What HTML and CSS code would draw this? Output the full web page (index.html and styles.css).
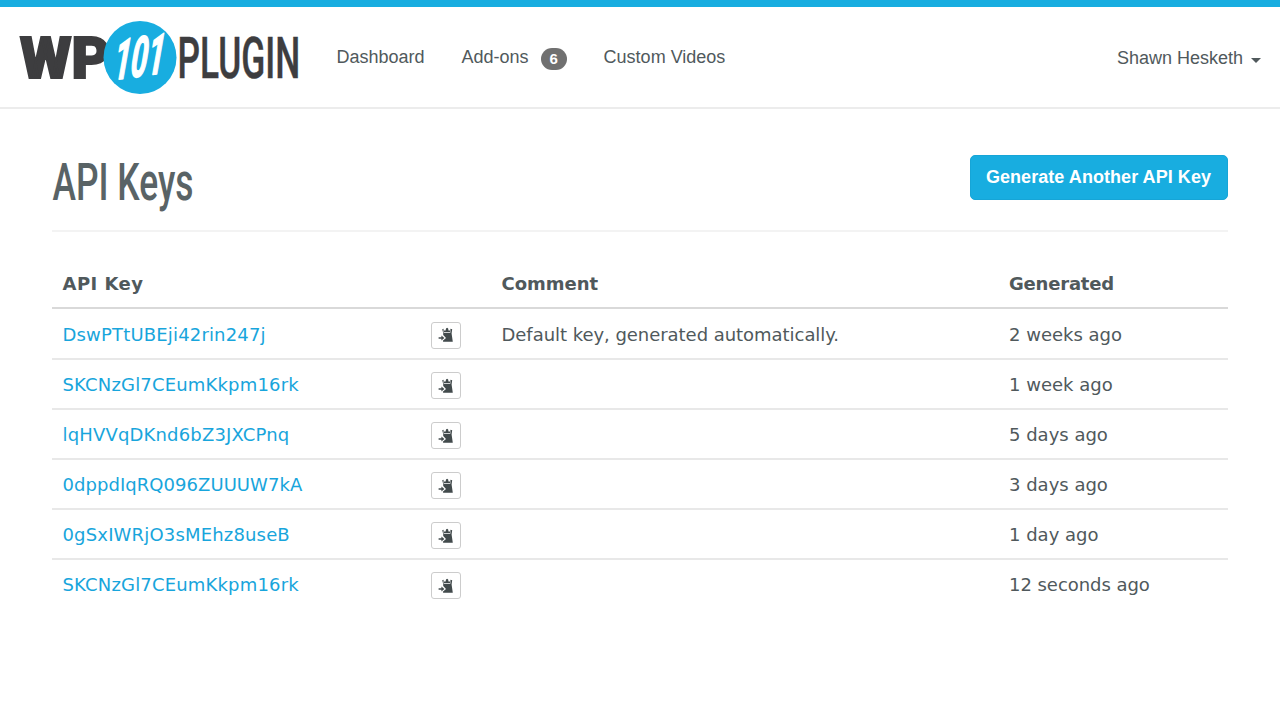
FILE: index.html
```html
<!DOCTYPE html>
<html lang="en">
<head>
<meta charset="utf-8">
<title>API Keys</title>
<link rel="stylesheet" href="styles.css">
</head>
<body>
<svg width="0" height="0" class="sprite" aria-hidden="true">
  <symbol id="paste" viewBox="0 0 16 16">
    <path d="M4.2 2.2 5.6 1.8V5.8H12.4V1.8L14.2 2.2 13.6 6.5 14.8 14.8H5.2L4.8 13.8 8 11 5.2 8 5.2 6Z"/>
    <path d="M6 4.9V3.4H7.6Q7.7.8 9.1.8T10.5 3.4H12V4.9Z"/>
    <path d="M.6 10.2H3.4V8.6L6.4 11 3.4 13.4V11.8H.6Z"/>
  </symbol>
</svg>
<header class="site-header">
  <a class="logo">
    <svg width="282" height="76" viewBox="0 0 282 76">
      <text class="logo-wp" x="2" y="58" textLength="90" lengthAdjust="spacingAndGlyphs">WP</text>
      <circle cx="122" cy="37.5" r="36.5" fill="#18ade0"/>
      <text class="logo-101" transform="translate(95 60) rotate(-8) skewX(-13)" x="0" y="0" textLength="51" lengthAdjust="spacingAndGlyphs">101</text>
      <text class="logo-plugin" transform="translate(159.5 58) scale(.66 1)" x="0" y="0" textLength="186" lengthAdjust="spacingAndGlyphs">PLUGIN</text>
    </svg>
  </a>
  <nav class="nav">
    <a>Dashboard</a>
    <a class="addons">Add-ons <span class="badge">6</span></a>
    <a>Custom Videos</a>
  </nav>
  <a class="user">Shawn Hesketh <span class="caret"></span></a>
</header>
<main class="content">
  <div class="page-head">
    <h1 class="title"><svg width="142" height="56" viewBox="0 0 142 56"><text x="-0.5" y="44.5" textLength="141" lengthAdjust="spacingAndGlyphs">API Keys</text></svg></h1>
    <button class="generate">Generate Another API Key</button>
  </div>
  <div class="table">
    <div class="row head"><span class="wide">API Key</span><span></span><span>Comment</span><span class="tight">Generated</span></div>
    <div class="row"><a class="key">DswPTtUBEji42rin247j</a><button class="copy"><svg width="16" height="16"><use href="#paste"/></svg></button><span class="comment">Default key, generated automatically.</span><span>2 weeks ago</span></div>
    <div class="row"><a class="key">SKCNzGl7CEumKkpm16rk</a><button class="copy"><svg width="16" height="16"><use href="#paste"/></svg></button><span></span><span>1 week ago</span></div>
    <div class="row"><a class="key">lqHVVqDKnd6bZ3JXCPnq</a><button class="copy"><svg width="16" height="16"><use href="#paste"/></svg></button><span></span><span>5 days ago</span></div>
    <div class="row"><a class="key key-wide">0dppdIqRQ096ZUUUW7kA</a><button class="copy"><svg width="16" height="16"><use href="#paste"/></svg></button><span></span><span>3 days ago</span></div>
    <div class="row"><a class="key">0gSxIWRjO3sMEhz8useB</a><button class="copy"><svg width="16" height="16"><use href="#paste"/></svg></button><span></span><span>1 day ago</span></div>
    <div class="row"><a class="key">SKCNzGl7CEumKkpm16rk</a><button class="copy"><svg width="16" height="16"><use href="#paste"/></svg></button><span></span><span class="comment">12 seconds ago</span></div>
  </div>
</main>
</body>
</html>
```
FILE: styles.css
```css
* { box-sizing: border-box; }
body { margin: 0; height: 720px; overflow: hidden; background: #fff; color: #50595c; font-family: "Liberation Sans", Arial, sans-serif; font-size: 18px; }
.sprite { display: block; }
.site-header { height: 109px; border-top: 7px solid #18ade0; border-bottom: 2px solid #ececec; display: flex; align-items: flex-start; padding: 13px 19px 0 18px; }
.logo { height: 76px; }
.logo svg { display: block; overflow: visible; }
.logo-wp { font: 900 57px Roboto, sans-serif; fill: #3d3d3f; stroke: #3d3d3f; stroke-width: 2; }
.logo-plugin { font: 500 58px Roboto, sans-serif; fill: #3d3d3f; stroke: #3d3d3f; stroke-width: .5; }
.logo-101 { font: italic 700 55px Roboto, sans-serif; fill: #fff; stroke: #fff; stroke-width: 1.6; stroke-linejoin: round; }
.nav { display: flex; gap: 37px; padding: 27px 0 0 36.5px; line-height: 21px; }
.addons { display: flex; }
.badge { width: 26px; height: 22px; margin: 1px 0 0 12px; border-radius: 11px; background: #707070; color: #fff; font-size: 15px; font-weight: 700; line-height: 22px; text-align: center; }
.user { display: flex; align-items: center; gap: 8px; margin-left: auto; padding-top: 28px; line-height: 21px; }
.caret { border: 5px solid transparent; border-top-color: #50595c; border-bottom: 0; margin-top: 3px; }
.content { padding: 0 52px; }
.page-head { height: 123px; border-bottom: 2px solid #f3f3f3; display: flex; justify-content: space-between; align-items: flex-start; padding-top: 46px; }
.title { margin: 0 0 0 1px; height: 56px; }
.title svg { display: block; overflow: visible; }
.title text { font: 500 51px Roboto, sans-serif; fill: #596366; }
.generate { width: 258px; height: 45px; border: 1px solid #16a5d7; border-radius: 5px; background: #18ade0; color: #fff; font: 700 18px "Liberation Sans", Arial, sans-serif; letter-spacing: .06px; padding: 0 1px 0 0; }
.table { padding-top: 27px; font-family: "DejaVu Sans", Verdana, sans-serif; }
.row { display: grid; grid-template-columns: 368.5px 70.5px 507.5px 1fr; align-items: center; height: 50px; padding-left: 10.5px; border-bottom: 2px solid #e8e8e8; }
.row:last-child { border-bottom-color: transparent; }
.head { border-bottom: 2px solid #d9d9d9; font-weight: 700; padding-top: 1px; }
.head + .row { height: 51px; padding-top: 1px; }
.head + .row .copy { margin-top: 2px; }
.wide { letter-spacing: .45px; }
.tight { letter-spacing: -.2px; }
.comment { letter-spacing: -.04px; }
.key { color: #18a5dc; letter-spacing: .17px; }
.key-wide { letter-spacing: .05px; }
.copy { width: 30px; height: 27px; margin-top: 3px; padding: 0; display: flex; align-items: center; justify-content: center; border: 1px solid #ccc; border-radius: 3px; background: #fff; fill: #424a4c; }
```
